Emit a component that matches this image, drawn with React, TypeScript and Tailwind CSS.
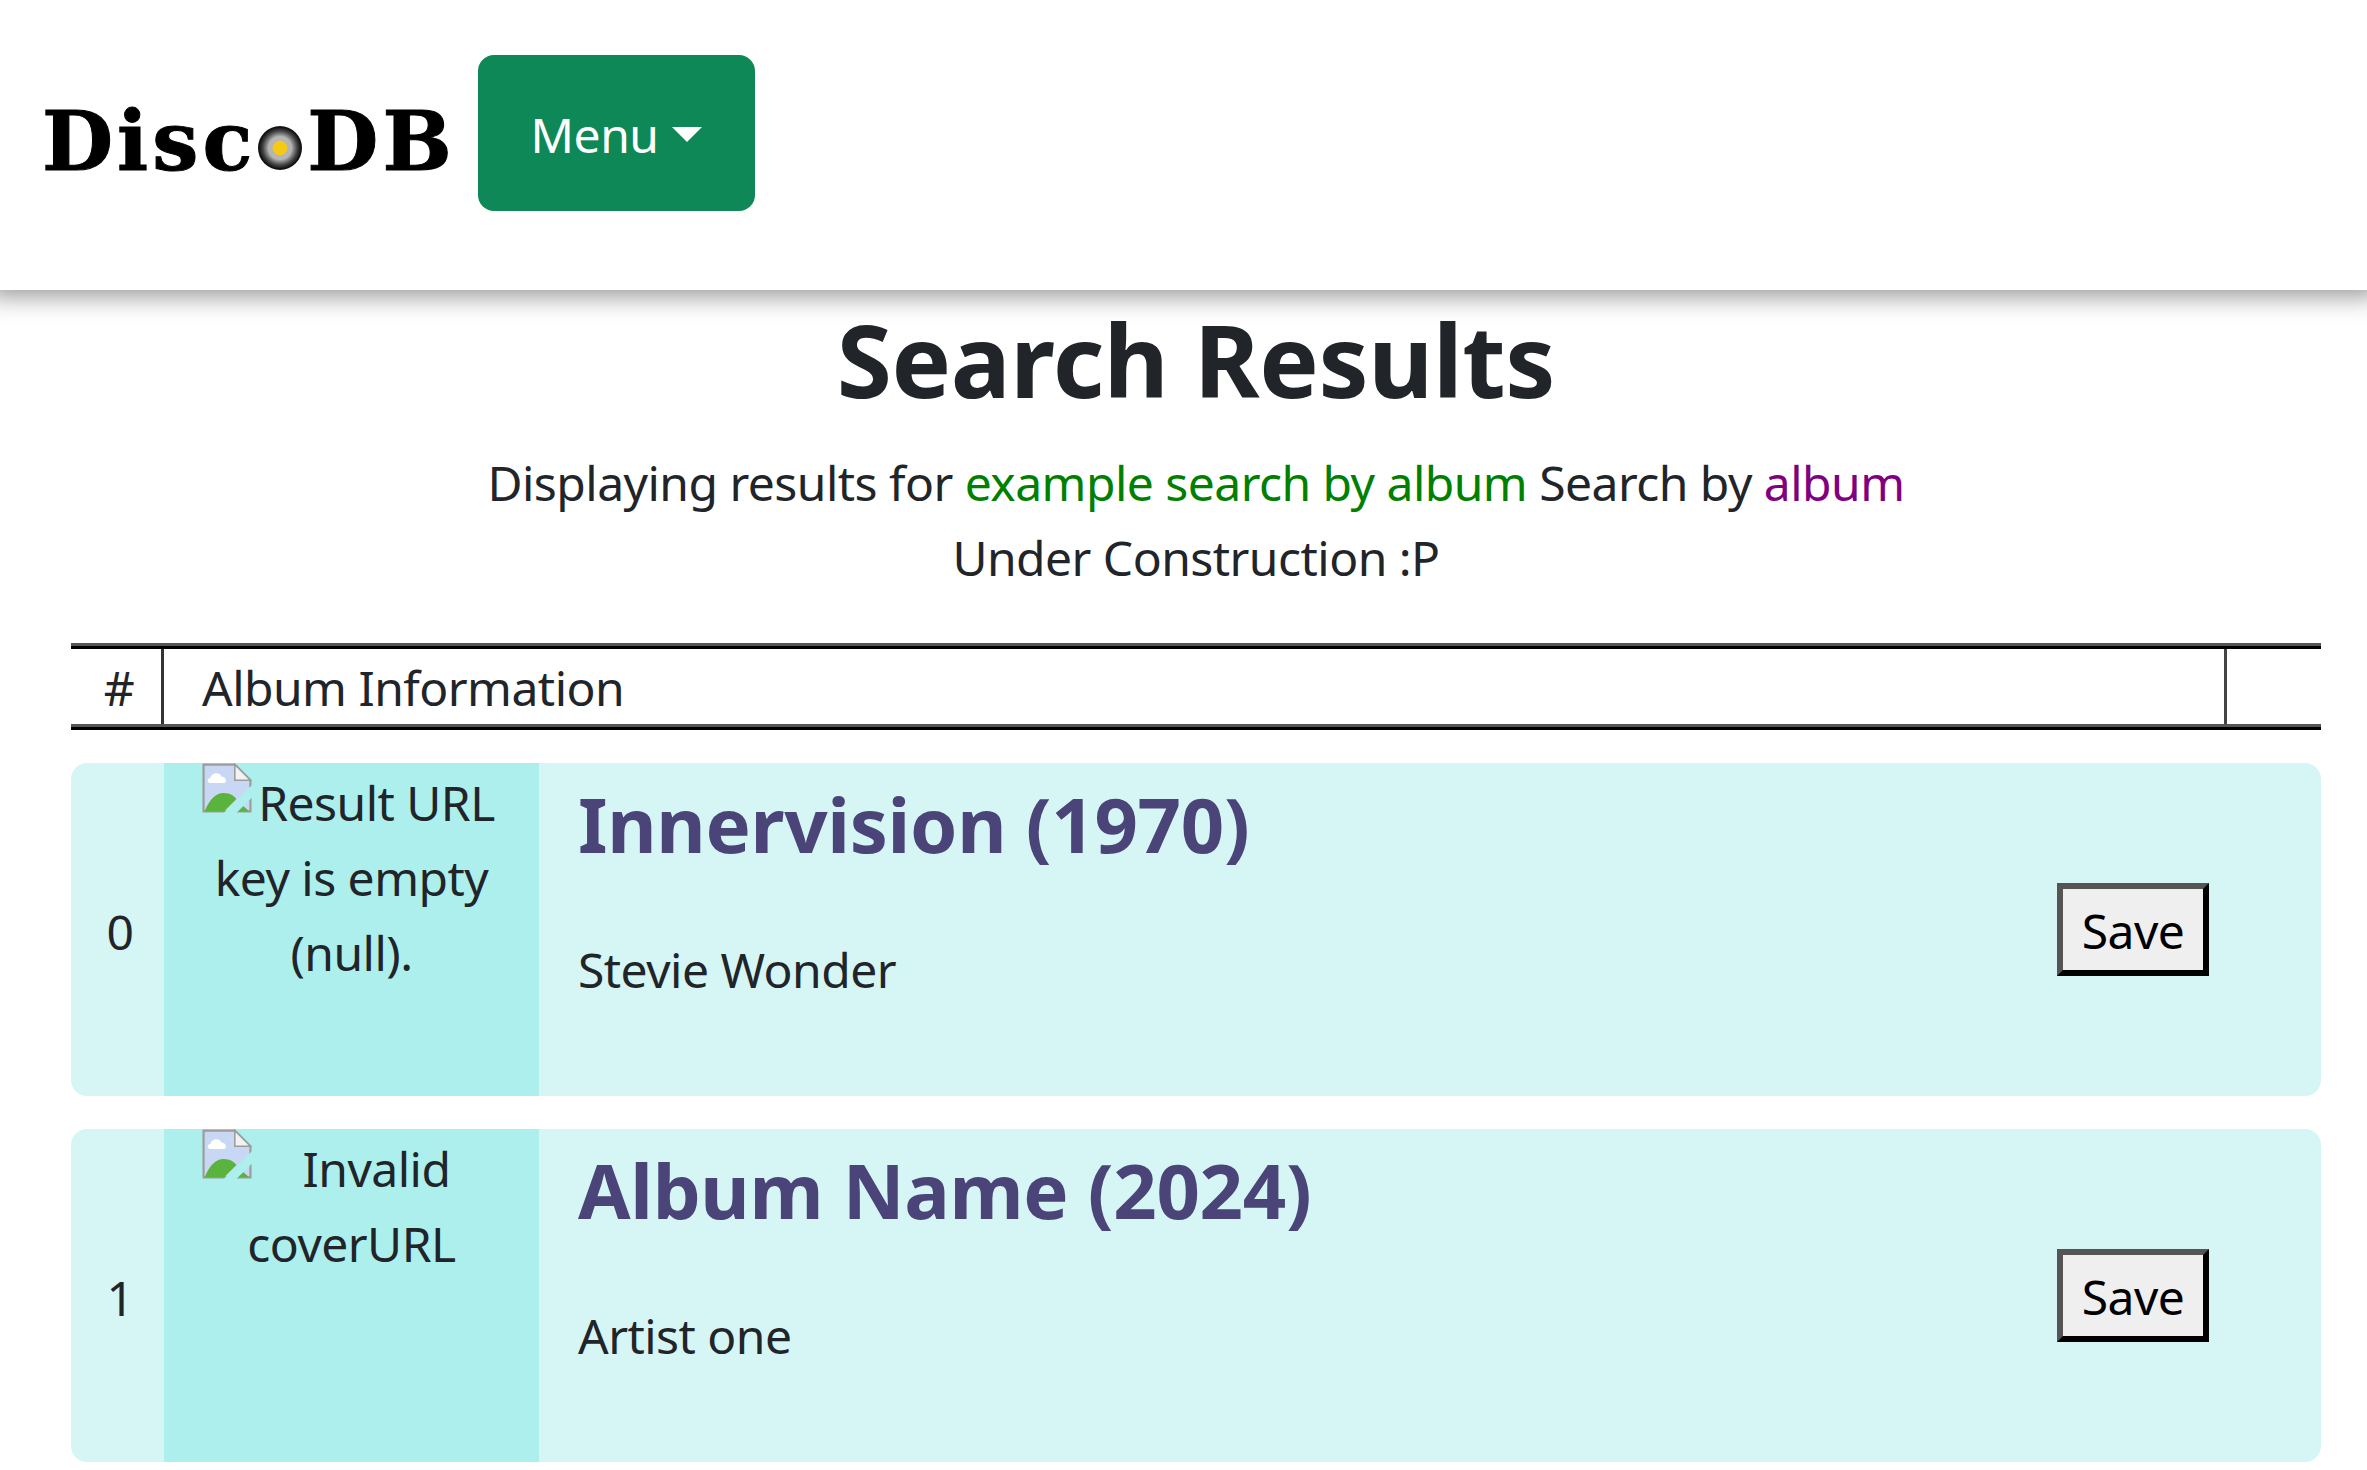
import React from 'react';

type Album = {
  index: number;
  title: string;
  artist: string;
  alt: string;
};

const ALBUMS: Album[] = [
  { index: 0, title: 'Innervision (1970)', artist: 'Stevie Wonder', alt: 'Result URL key is empty (null).' },
  { index: 1, title: 'Album Name (2024)', artist: 'Artist one', alt: 'Invalid coverURL' },
];

function BrokenImageIcon() {
  return (
    <svg viewBox="0 0 16 16" className="float-left -mt-[2px] block h-[50px] w-[50px]">
      <path d="M0.5 0.5H10.5L15.5 5.5V15.5H0.5Z" fill="#c8d8f4" stroke="#9c9c9c" strokeWidth="0.7" />
      <path d="M10.5 0.5V5.5H15.5Z" fill="#f2f2f2" stroke="#9c9c9c" strokeWidth="0.5" />
      <path d="M2.6 6.4C1.6 6.4 1.5 4.9 2.7 4.7 3 3.2 5.6 2.6 6.3 4.4 7.8 4.3 8.2 6.4 6.9 6.4Z" fill="#ffffff" />
      <path d="M0.8 15.5C2.5 11.5 4.5 9.6 7 9.6 9 9.6 10.2 10.5 11 11.5L7 15.5Z" fill="#5ab33c" />
      <path d="M11 15.5 13 13.6 15.2 15.5Z" fill="#5ab33c" />
      <path d="M7 16 16 7V11L11 16Z" fill="#acefed" />
    </svg>
  );
}

function Logo() {
  return (
    <div className="mt-[50px] -ml-[3px] flex w-[406px] items-baseline font-['DejaVu_Serif',serif] text-[82px] font-bold leading-[72px] tracking-[4px] text-black [-webkit-text-stroke:1px_black]">
      <span>Disc</span>
      <span className="ml-[2px] mr-[5px] h-[44px] w-[44px] shrink-0 rounded-full bg-[radial-gradient(circle_closest-side,#f5c916_0,#f5c916_30%,#b5b5b5_36%,#b5b5b5_52%,#888888_62%,#444444_78%,#111111_95%)]" />
      <span>DB</span>
    </div>
  );
}

function AlbumRow({ album }: { album: Album }) {
  return (
    <div className="flex h-[333px] overflow-hidden rounded-[16px] bg-[#d6f5f5]">
      <div className="flex w-[93px] shrink-0 items-center justify-center pt-[3px] pl-[5px]">{album.index}</div>
      <div className="w-[375px] shrink-0 bg-[#acefed]">
        <div className="mx-auto w-[300px] pt-[2px] text-center">
          <BrokenImageIcon />
          {album.alt}
        </div>
      </div>
      <div className="flex-1 pl-[39px]">
        <h2 className="mb-[51px] pt-[4px] text-[76px] font-bold leading-[114px] tracking-[-0.3px] text-[#4b4478]">
          {album.title}
        </h2>
        <div>{album.artist}</div>
      </div>
      <div className="flex w-[264px] shrink-0 items-center">
        <button
          type="button"
          className="h-[93px] w-[152px] border-[6px] border-t-[#555555] border-r-black border-b-black border-l-[#555555] bg-[#efefef] pt-[2px] text-black"
        >
          Save
        </button>
      </div>
    </div>
  );
}

export default function App() {
  return (
    <div className="min-h-screen bg-white font-['Noto_Sans',sans-serif] text-[48px] leading-[75px] tracking-[-0.53px] text-[#212529]">
      <header className="flex h-[290px] items-start bg-white pt-[55px] pl-[45px] shadow-[0_-6px_24px_12px_rgba(0,0,0,0.42)]">
        <Logo />
        <button
          type="button"
          className="ml-[30px] flex h-[156px] w-[277px] items-center justify-center gap-[14px] rounded-[16px] bg-[#0d8856] pt-[3px] text-white"
        >
          Menu
          <span className="h-0 w-0 border-x-[15px] border-t-[15px] border-x-transparent border-t-white" />
        </button>
      </header>

      <main className="pr-[46px] pb-[9px] pl-[71px]">
        <h1 className="pt-[9px] text-center text-[100px] font-bold leading-[120px] tracking-[-0.4px]">Search Results</h1>
        <p className="mt-[26px] text-center">
          Displaying results for <span className="text-[#008000]">example search by album</span> Search by{' '}
          <span className="text-[#800080]">album</span>
        </p>
        <p className="text-center">Under Construction :P</p>

        <div className="mt-[48px] border-t-[3px] border-b-[3px] border-t-[#555555] border-b-black">
          <div className="flex h-[81px] border-t-[3px] border-b-[3px] border-t-black border-b-[#555555]">
            <div className="flex w-[93px] items-center justify-center border-r-[3px] border-[#333333] pt-[2px] pl-[6px]">#</div>
            <div className="flex flex-1 items-center border-r-[3px] border-[#444444] pt-[2px] pl-[38px]">Album Information</div>
            <div className="w-[94px]" />
          </div>
        </div>

        <div className="mt-[33px] flex flex-col gap-[33px]">
          {ALBUMS.map(album => (
            <AlbumRow key={album.index} album={album} />
          ))}
        </div>
      </main>
    </div>
  );
}
